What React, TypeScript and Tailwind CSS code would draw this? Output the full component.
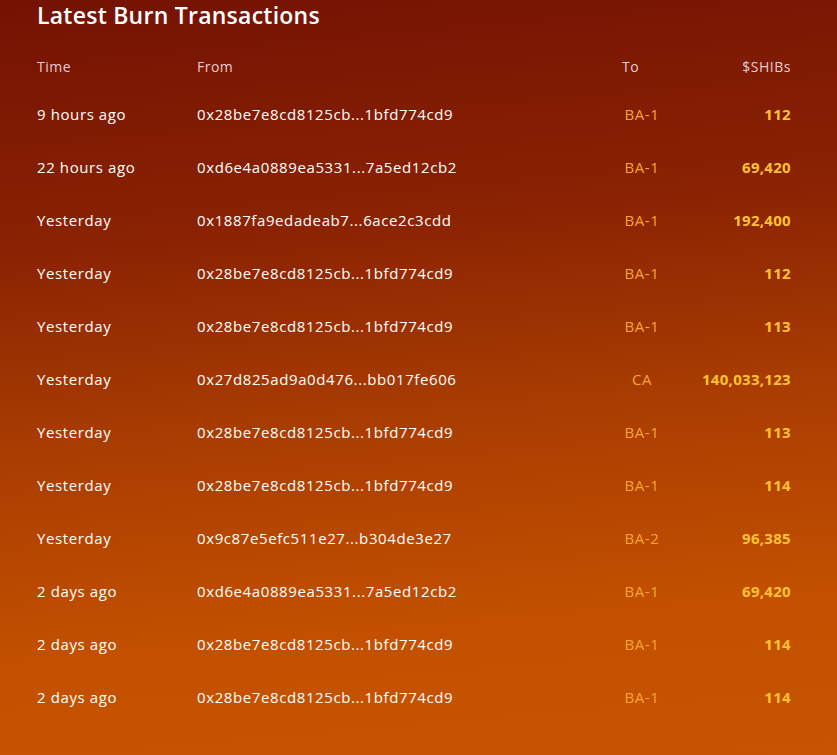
import React from "react";

const rows: [string, string, string, string][] = [
  ["9 hours ago", "0x28be7e8cd8125cb...1bfd774cd9", "BA-1", "112"],
  ["22 hours ago", "0xd6e4a0889ea5331...7a5ed12cb2", "BA-1", "69,420"],
  ["Yesterday", "0x1887fa9edadeab7...6ace2c3cdd", "BA-1", "192,400"],
  ["Yesterday", "0x28be7e8cd8125cb...1bfd774cd9", "BA-1", "112"],
  ["Yesterday", "0x28be7e8cd8125cb...1bfd774cd9", "BA-1", "113"],
  ["Yesterday", "0x27d825ad9a0d476...bb017fe606", "CA", "140,033,123"],
  ["Yesterday", "0x28be7e8cd8125cb...1bfd774cd9", "BA-1", "113"],
  ["Yesterday", "0x28be7e8cd8125cb...1bfd774cd9", "BA-1", "114"],
  ["Yesterday", "0x9c87e5efc511e27...b304de3e27", "BA-2", "96,385"],
  ["2 days ago", "0xd6e4a0889ea5331...7a5ed12cb2", "BA-1", "69,420"],
  ["2 days ago", "0x28be7e8cd8125cb...1bfd774cd9", "BA-1", "114"],
  ["2 days ago", "0x28be7e8cd8125cb...1bfd774cd9", "BA-1", "114"],
];

export default function App() {
  return (
    <div
      className="w-[837px] h-[755px] overflow-hidden bg-[linear-gradient(175deg,#741203_0%,#8a2203_30%,#a93d02_55%,#c35000_80%,#c75400_100%)] pl-[37px] pr-[46px] pt-[2px]"
      style={{ fontFamily: "'Open Sans', Lato, sans-serif" }}
    >
      <h1 className="text-white text-[23px] font-semibold leading-[26px] tracking-[0.25px]">
        Latest Burn Transactions
      </h1>
      <div className="grid grid-cols-[160px_425px_40px_1fr] mt-[28px] text-[14px] tracking-[0.5px] text-[#e3cdd3] h-[20px] items-center">
        <div>Time</div>
        <div>From</div>
        <div>To</div>
        <div className="text-right">$SHIBs</div>
      </div>
      <div className="mt-[28px]">
        {rows.map((r, i) => (
          <div
            key={i}
            className="grid grid-cols-[160px_425px_40px_1fr] h-[53px] items-start text-[15px] leading-[20px] tracking-[0.6px]"
          >
            <div className="text-white">{r[0]}</div>
            <div className="text-white">{r[1]}</div>
            <div className="text-[#f7a436] text-center whitespace-nowrap">{r[2]}</div>
            <div className="text-[#ffc233] font-bold text-right tracking-[0.3px]">{r[3]}</div>
          </div>
        ))}
      </div>
    </div>
  );
}
